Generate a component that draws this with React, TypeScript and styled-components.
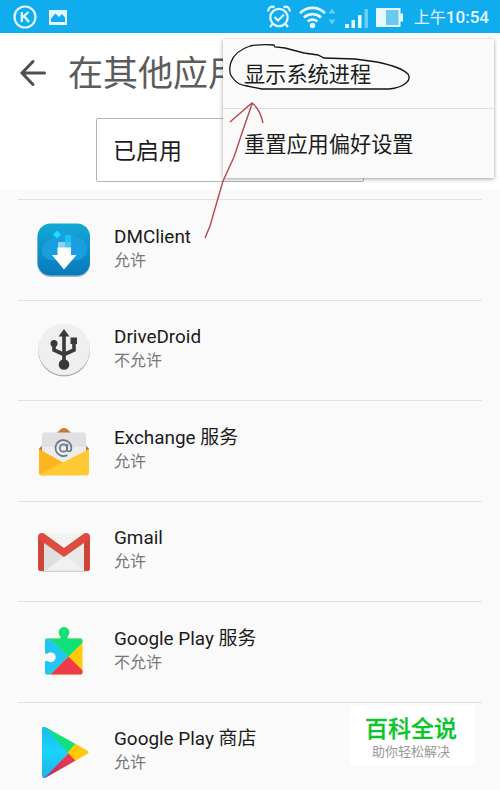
import React from 'react'
import styled, { createGlobalStyle } from 'styled-components'

const GlobalStyle = createGlobalStyle`
  html, body {
    margin: 0;
    padding: 0;
    overflow: hidden;
  }
  body {
    background: #fafafa;
    font-family: Roboto, 'Noto Sans CJK SC', sans-serif;
  }
  * {
    box-sizing: border-box;
  }
  svg {
    display: block;
  }
`

const Screen = styled.div`
  position: relative;
  width: 500px;
  height: 790px;
  overflow: hidden;
  background: #fafafa;
`

const StatusBar = styled.header`
  display: flex;
  align-items: center;
  justify-content: space-between;
  height: 33px;
  padding: 1px 11px 0 13px;
  background: #0fadee;
  color: #e6f8ff;
`

const StatusGroup = styled.div<{ $gap: number }>`
  display: flex;
  align-items: center;
  gap: ${({ $gap }) => $gap}px;
`

const Clock = styled.span`
  margin-left: 2px;
  font-size: 17px;
  line-height: 20px;
  font-weight: 500;
  white-space: nowrap;
`

const ClockPrefix = styled.span`
  font-size: 16px;
  font-weight: 400;
`

const Header = styled.div`
  height: 156px;
  background: #fff;
`

const TitleRow = styled.div`
  display: flex;
  align-items: center;
  height: 85px;
  padding: 0 0 6px 19px;
`

const Title = styled.h1`
  margin: 4px 0 0 21px;
  color: #5c5c5c;
  font-size: 35px;
  font-weight: 400;
  line-height: 46px;
  white-space: nowrap;
`

const Filter = styled.div`
  display: flex;
  align-items: center;
  width: 268px;
  height: 64px;
  margin-left: 96px;
  padding: 0 16px 2px;
  border: 1px solid #b4b4b4;
  border-radius: 2px;
  color: #1c1c1c;
  font-size: 23px;
`

const AppList = styled.ul`
  margin: 10px 18px 0;
  padding: 0;
  list-style: none;
`

const AppItem = styled.li`
  display: flex;
  align-items: center;
  height: 100.5px;
  padding-left: 18px;
  border-top: 1px solid #e2e2e2;
`

const AppText = styled.div`
  margin: -4px 0 0 22px;
`

const AppName = styled.div`
  color: #1b1b1b;
  font-size: 18.9px;
  line-height: 25px;
`

const AppState = styled.div`
  color: #777;
  font-size: 16px;
  line-height: 23px;
`

const Menu = styled.div`
  position: absolute;
  top: 39px;
  left: 223px;
  width: 271px;
  background: #fafafa;
  box-shadow: 0 1px 4px rgba(0, 0, 0, 0.38);
`

const MenuItem = styled.div`
  display: flex;
  align-items: center;
  height: 69px;
  padding: 0 21px 2px;
  color: #1c1c1c;
  font-size: 21.2px;

  & + & {
    height: 70px;
    border-top: 1px solid #dedede;
  }
`

const Annotation = styled.svg`
  position: absolute;
  top: 0;
  left: 0;
  pointer-events: none;
`

const Watermark = styled.div`
  position: absolute;
  top: 705px;
  left: 350px;
  display: flex;
  flex-direction: column;
  align-items: center;
  width: 125px;
  height: 60px;
  padding: 10px 3px 0 0;
  background: #fff;
`

const WatermarkName = styled.div`
  color: #0cc42c;
  font-size: 23px;
  font-weight: 500;
  -webkit-text-stroke: 0.3px #0cc42c;
  line-height: 29px;
`

const WatermarkSlogan = styled.div`
  color: #999;
  font-size: 13px;
  line-height: 15px;
`

const KIcon = () => (
  <svg width="24" height="24" viewBox="0 0 24 24" fill="none" stroke="#e6f8ff">
    <circle cx="12" cy="12" r="10.5" strokeWidth="2.2" />
    <path d="M8.8 7v10M15.5 7l-6 5.3M11 11l5 6" strokeWidth="2.3" />
  </svg>
)

const PictureIcon = () => (
  <svg width="18" height="15" viewBox="0 0 18 15">
    <path fill="#e6f8ff" fillRule="evenodd" d="M0 0h18v15H0zM2 8.5V12h14V7.5l-3-3.500-3 3-3.500-3.500z" />
  </svg>
)

const AlarmIcon = () => (
  <svg width="24" height="24" viewBox="0 0 24 24" fill="none" stroke="#e6f8ff" strokeWidth="2.2">
    <circle cx="12" cy="12.5" r="8.7" />
    <path d="M1.5 6.5a4 4 0 0 1 6-4.3M22.5 6.5a4 4 0 0 0-6-4.3M5.5 19l-2.5 3M18.5 19l2.5 3" />
    <path d="M7.5 12l3.5 3.5 6-6" />
  </svg>
)

const WifiIcon = () => (
  <svg width="38" height="24" viewBox="0 0 38 24" fill="none" stroke="#e6f8ff" strokeWidth="2.7">
    <path d="M1 8.2a17.5 17.5 0 0 1 25 0M5 12.4a12.4 12.4 0 0 1 17 0M8.7 16.4a7.2 7.2 0 0 1 9.6 0" />
    <circle cx="13.5" cy="20.5" r="2.7" fill="#e6f8ff" stroke="none" />
    <path d="M29.5 8.5L33 3.500l3.500 5zM29.500 14.500l3.500 5 3.500-5z" fill="#6bcff5" stroke="none" />
  </svg>
)

const SignalIcon = () => (
  <svg width="23" height="22" viewBox="0 0 23 22" fill="#e6f8ff">
    <path d="M0 18h4v4H0zM6.500 14h3.500v8H6.500zM13 9h3.500v13H13z" />
    <path d="M19.500 3H23v19h-3.500z" fill="#6bcff5" />
  </svg>
)

const BatteryIcon = () => (
  <svg width="28" height="19" viewBox="0 0 28 19">
    <path d="M0 0h24.500v5.500H27v8h-2.500V19H0z" fill="#e6f8ff" />
    <path d="M10 2h12.500v15H10z" fill="#6bc9f0" />
  </svg>
)

const BackIcon = () => (
  <svg width="28" height="28" viewBox="0 0 28 28" fill="none" stroke="#505050" strokeWidth="3" strokeLinecap="round">
    <path d="M25.500 14H3.500M14 2.500L3 14l11 11.500" />
  </svg>
)

const DmClientIcon = () => (
  <svg width="56" height="56" viewBox="0 0 56 56">
    <defs>
      <linearGradient id="dm" x1="0" y1="0" x2="0" y2="1">
        <stop offset="0" stopColor="#12a9d6" />
        <stop offset="1" stopColor="#0879bd" />
      </linearGradient>
    </defs>
    <rect x="1.500" y="3" width="52.500" height="52" rx="13" fill="#aab8c2" />
    <rect x="1.500" y="1.500" width="52.500" height="52" rx="13" fill="url(#dm)" />
    <path d="M16 38a9.500 9.500 0 0 1-1-19.500 13 13 0 0 1 25-3 11 11 0 0 1 0 22.500z" fill="#1a9ee0" />
    <path d="M29 13h6v11H23v-4h6z" fill="#16c4ee" />
    <path d="M21 8.500l4 4-4 4-4-4z" fill="#18e0f5" />
    <path d="M22 20h7v6h-7z" fill="#86d4ef" />
    <path d="M29 20h6v6h-6z" fill="#49c4ee" />
    <path d="M21.500 25.500H35V33h5.500L28 47.500 16 33h5.500z" fill="#fff" />
  </svg>
)

const DriveDroidIcon = () => (
  <svg width="56" height="56" viewBox="0 0 56 56">
    <circle cx="28" cy="28.700" r="25.800" fill="#aaa" />
    <circle cx="28" cy="27.300" r="25.800" fill="#efefef" />
    <g fill="#3a3a3a">
      <path d="M28 7l5.500 7.500h-11z" />
      <circle cx="28" cy="42.500" r="5.300" />
      <circle cx="18" cy="21.500" r="3.500" />
      <path d="M34.500 15.500H41V22h-6.500z" />
    </g>
    <path d="M28 12v30M18 22v6l10 4.500M38 20v8l-10 4.500" fill="none" stroke="#3a3a3a" strokeWidth="3.600" />
  </svg>
)

const ExchangeIcon = () => (
  <svg width="56" height="56" viewBox="0 0 56 56">
    <path d="M3 25.500L25 6q3-2 6 0l22 19.500V34H3z" fill="#c87930" />
    <path d="M6 12q0-2.500 2.500-2.500h39Q50 9.500 50 12v28H6z" fill="#e1e1e1" />
    <path d="M6 24h44v16H6z" fill="#ececec" />
    <path d="M3 26l25 14-20 12.500H6q-3 0-3-3z" fill="#fbb51e" />
    <path d="M53 26v23.500q0 3-3 3H6q-1.500 0-2.500-1z" fill="#fdca35" />
    <g fill="none" stroke="#64788c" strokeWidth="1.700">
      <circle cx="27.500" cy="25" r="3.700" />
      <path d="M31.200 21v5q0 2.700 2.200 2.500 2-.5 2-3.500a8 8 0 1 0-4 7" />
    </g>
  </svg>
)

const GmailIcon = () => (
  <svg width="56" height="56" viewBox="0 0 56 56">
    <path d="M6 10h44v38H6z" fill="#e9e9e9" />
    <path d="M8 48l20-16 20 16z" fill="#f1f1f1" />
    <path d="M8 20l20 13L11 47H8z" fill="#dedede" />
    <path d="M6 10h44L28 27z" fill="#f3f3f3" />
    <path d="M2 14q0-4 4-4 1.500 0 3 1.200L28 25l19-13.800q1.500-1.200 3-1.200 4 0 4 4v31q0 3-3 3h-3V20L28 34 8 20v28H5q-3 0-3-3z" fill="#dc4d40" />
    <path d="M8 20v28H5q-3 0-3-3V16zM48 20v28h3q3 0 3-3V16z" fill="#ce4439" />
    <path d="M5 48.300h46" stroke="#bbb" strokeWidth=".8" />
  </svg>
)

const PlayServicesIcon = () => (
  <svg width="56" height="56" viewBox="0 0 56 56">
    <defs>
      <clipPath id="puzzle">
        <path d="M11 14.500h13.500v-2.200a5.300 5.300 0 1 1 7 0v2.200h13q2 0 2 2v32q0 2-2 2H11q-2 0-2-2V37h2.500a5 5 0 1 0 0-7.500H9v-13q0-2 2-2z" />
      </clipPath>
    </defs>
    <g clipPath="url(#puzzle)">
      <path d="M0 0h56v56H0z" fill="#ffca0a" />
      <path d="M9 14V0h38v18L32.500 32.500 13 14z" fill="#0fe178" />
      <path d="M9 13.500h3.500L32.500 32.500 14 51H9z" fill="#1ec8f4" />
      <path d="M13.500 51.500l19-19 19 19z" fill="#ef3a4a" />
    </g>
  </svg>
)

const PlayStoreIcon = () => (
  <svg width="56" height="56" viewBox="0 0 56 56">
    <defs>
      <linearGradient id="play-blue" x1="0" y1="0" x2="0" y2="1">
        <stop offset="0" stopColor="#18b9ee" />
        <stop offset=".5" stopColor="#1bd4fa" />
        <stop offset="1" stopColor="#1fb0ea" />
      </linearGradient>
      <linearGradient id="play-red" x1="1" y1="0" x2="0" y2="1">
        <stop offset="0" stopColor="#f63c48" />
        <stop offset="1" stopColor="#b52b60" />
      </linearGradient>
      <clipPath id="play">
        <path d="M6 4.500q0-3.500 3.500-2L51 25.500q3 2 0 4L9.500 53Q6 54.500 6 51z" />
      </clipPath>
    </defs>
    <g clipPath="url(#play)" transform="translate(0 .7)">
      <path d="M6 0h5l22 28L9 54H6z" fill="url(#play-blue)" />
      <path d="M8 1L42 18l-9.500 10.500z" fill="#0fe27a" />
      <path d="M39.500 18.500L54 27.500 39.500 37l-8-9z" fill="#ffc90b" />
      <path d="M7 55l25.500-26.500L39.500 36l-28 19z" fill="url(#play-red)" />
    </g>
  </svg>
)

const apps = [
  { name: 'DMClient', state: '允许', icon: <DmClientIcon /> },
  { name: 'DriveDroid', state: '不允许', icon: <DriveDroidIcon /> },
  { name: 'Exchange 服务', state: '允许', icon: <ExchangeIcon /> },
  { name: 'Gmail', state: '允许', icon: <GmailIcon /> },
  { name: 'Google Play 服务', state: '不允许', icon: <PlayServicesIcon /> },
  { name: 'Google Play 商店', state: '允许', icon: <PlayStoreIcon /> }
]

export default function App() {
  return (
    <Screen>
      <GlobalStyle />
      <StatusBar>
        <StatusGroup $gap={12}>
          <KIcon />
          <PictureIcon />
        </StatusGroup>
        <StatusGroup $gap={8}>
          <AlarmIcon />
          <WifiIcon />
          <SignalIcon />
          <BatteryIcon />
          <Clock>
            <ClockPrefix>上午</ClockPrefix>10:54
          </Clock>
        </StatusGroup>
      </StatusBar>
      <Header>
        <TitleRow>
          <BackIcon />
          <Title>在其他应用</Title>
        </TitleRow>
        <Filter>已启用</Filter>
      </Header>
      <AppList>
        {apps.map(app => (
          <AppItem key={app.name}>
            {app.icon}
            <AppText>
              <AppName>{app.name}</AppName>
              <AppState>{app.state}</AppState>
            </AppText>
          </AppItem>
        ))}
      </AppList>
      <Menu>
        <MenuItem>显示系统进程</MenuItem>
        <MenuItem>重置应用偏好设置</MenuItem>
      </Menu>
      <Annotation width="500" height="250" viewBox="0 0 500 250" fill="none">
        <path
          d="M250 46q-15 5-19 16-3 10 1 15 5 8 15 9l15 3h127q11-1 17-6 5-4 2-9-7-7-31-12l-22-3-31-1-6-3-14-2-19-5-10-1-1-2q-12-1-24 1"
          stroke="#151515"
          strokeWidth="1.300"
        />
        <path
          d="M205 238l5-12 4-14 9-31 11-24 9-27 9-26M230 122l8-7 14-12q8 6 11 20"
          stroke="#b44a4e"
          strokeWidth="1.400"
        />
      </Annotation>
      <Watermark>
        <WatermarkName>百科全说</WatermarkName>
        <WatermarkSlogan>助你轻松解决</WatermarkSlogan>
      </Watermark>
    </Screen>
  )
}
